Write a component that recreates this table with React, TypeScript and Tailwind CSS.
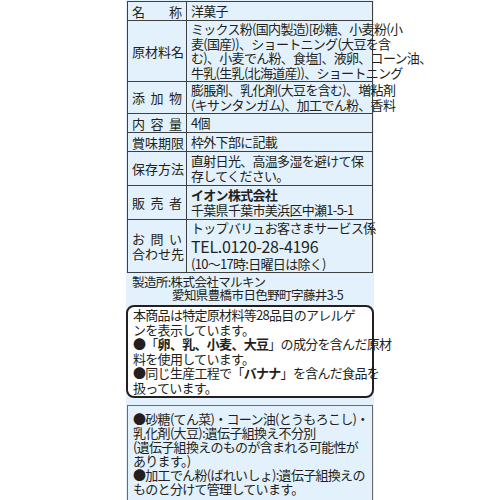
import React from 'react';

const font = { fontFamily: '"Noto Sans CJK JP", "Noto Sans", sans-serif' };

function Spread({ text }: { text: string }) {
  return (
    <div className="flex w-full justify-between">
      {text.split('').map((c, i) => (
        <span key={i}>{c}</span>
      ))}
    </div>
  );
}

interface RowProps {
  label: string[];
  children: React.ReactNode;
  last?: boolean;
}

function Row({ label, children, last }: RowProps) {
  return (
    <div className={`flex min-h-[19px] ${last ? '' : 'border-b border-[#3f3f3f]'}`}>
      <div className="w-[59px] shrink-0 border-r border-[#3f3f3f] px-[4px] flex flex-col justify-center text-[13px] leading-[15px]">
        {label.map((l, i) => (
          <Spread key={i} text={l} />
        ))}
      </div>
      <div className="flex-1 flex flex-col justify-center px-[4px] py-[1px] text-[13px] leading-[14.5px] tracking-[-0.7px] whitespace-nowrap">
        <div>{children}</div>
      </div>
    </div>
  );
}

export default function App() {
  return (
    <div className="w-[500px] h-[500px] bg-white overflow-hidden text-[#231f20]" style={font}>
      <div className="mx-auto w-[248px] h-full bg-[#e2f1fb] px-[1px] pt-[1px]">
        {/* Label table */}
        <div className="border border-[#3f3f3f]">
          <Row label={['名称']}>洋菓子</Row>
          <Row label={['原材料名']}>
            ミックス粉(国内製造)[砂糖、小麦粉(小
            <br />
            麦(国産))、ショートニング(大豆を含
            <br />
            む)、小麦でん粉、食塩]、液卵、コーン油、
            <br />
            牛乳(生乳(北海道産))、ショートニング
          </Row>
          <Row label={['添加物']}>
            膨脹剤、乳化剤(大豆を含む)、増粘剤
            <br />
            (キサンタンガム)、加工でん粉、香料
          </Row>
          <Row label={['内容量']}>4個</Row>
          <Row label={['賞味期限']}>枠外下部に記載</Row>
          <Row label={['保存方法']}>
            <div className="py-[1px]">
              直射日光、高温多湿を避けて保
              <br />
              存してください。
            </div>
          </Row>
          <Row label={['販売者']}>
            <div className="py-[1px]">
              <span className="font-bold">イオン株式会社</span>
              <br />
              千葉県千葉市美浜区中瀬1-5-1
            </div>
          </Row>
          <Row label={['お問い', '合わせ先']} last>
            トップバリュお客さまサービス係
            <br />
            <span className="inline-block text-[16px] leading-[21px] tracking-[-0.3px]">TEL.0120-28-4196</span>
            <br />
            (10〜17時:日曜日は除く)
          </Row>
        </div>

        {/* Manufacturer */}
        <div className="px-[5px] pt-[2px] pb-[4px] text-[12.5px] leading-[13px] tracking-[-0.6px] whitespace-nowrap">
          <div>製造所:株式会社マルキン</div>
          <div className="pl-[40px]">愛知県豊橋市日色野町字藤井3-5</div>
        </div>

        {/* Allergen notice */}
        <div className="-mx-[1px] rounded-[8px] border-2 border-[#231f20] bg-white px-[5px] py-[1px] text-[13px] leading-[14.5px] tracking-[-0.7px] whitespace-nowrap">
          本商品は特定原材料等28品目のアレルゲ
          <br />
          ンを表示しています。
          <br />
          ●「<span className="font-bold">卵、乳、小麦、大豆</span>」の成分を含んだ原材
          <br />
          料を使用しています。
          <br />
          ●同じ生産工程で「<span className="font-bold">バナナ</span>」を含んだ食品を
          <br />
          扱っています。
        </div>

        {/* GMO notice */}
        <div className="mt-[7px] border border-[#6b6b6b] px-[5px] pt-[6px] pb-[4px] text-[13px] leading-[14px] tracking-[-0.7px] whitespace-nowrap">
          ●砂糖(てん菜)・コーン油(とうもろこし)・
          <br />
          乳化剤(大豆):遺伝子組換え不分別
          <br />
          (遺伝子組換えのものが含まれる可能性が
          <br />
          あります。)
          <br />
          ●加工でん粉(ばれいしょ):遺伝子組換えの
          <br />
          ものと分けて管理しています。
        </div>
      </div>
    </div>
  );
}
